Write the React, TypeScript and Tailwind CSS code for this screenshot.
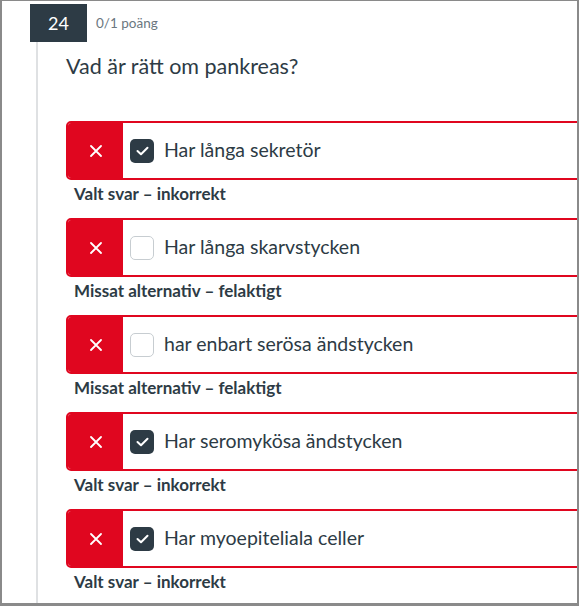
import React from "react";

type Answer = {
  text: string;
  checked: boolean;
  label: string;
};

const answers: Answer[] = [
  { text: "Har långa sekretör", checked: true, label: "Valt svar – inkorrekt" },
  { text: "Har långa skarvstycken", checked: false, label: "Missat alternativ – felaktigt" },
  { text: "har enbart serösa ändstycken", checked: false, label: "Missat alternativ – felaktigt" },
  { text: "Har seromykösa ändstycken", checked: true, label: "Valt svar – inkorrekt" },
  { text: "Har myoepiteliala celler", checked: true, label: "Valt svar – inkorrekt" },
];

function AnswerRow({ text, checked, label }: Answer) {
  return (
    <div>
      <div className="flex h-[59px] w-[560px] rounded-l-[5px] border-2 border-[#e0061f] overflow-hidden">
        <div className="flex w-[55px] items-center justify-center bg-[#e0061f]">
          <svg width="12" height="12" viewBox="0 0 12 12" fill="none">
            <path d="M1 1L11 11M11 1L1 11" stroke="white" strokeWidth="1.8" strokeLinecap="round" />
          </svg>
        </div>
        <div className="flex items-center pl-[7px]">
          {checked ? (
            <span className="flex h-[24px] w-[24px] items-center justify-center rounded-[5px] bg-[#2d3b45]">
              <svg width="13" height="10" viewBox="0 0 13 10" fill="none">
                <path d="M1.5 5L5 8.3L11.5 1.7" stroke="white" strokeWidth="2" strokeLinecap="round" strokeLinejoin="round" />
              </svg>
            </span>
          ) : (
            <span className="h-[24px] w-[24px] rounded-[5px] border border-[#c7cdd1] bg-white" />
          )}
          <span className="ml-[10px] -mt-[2px] text-[19.5px] text-[#2d3b45]">{text}</span>
        </div>
      </div>
      <div className="h-[38px] pl-[8px] pt-[3px] text-[17px] font-bold leading-[22px] text-[#2d3b45]">
        {label}
      </div>
    </div>
  );
}

export default function App() {
  return (
    <div
      className="h-[606px] w-[579px] overflow-hidden border-x-2 border-t border-b-[3px] border-[#8a8a8a] bg-white"
      style={{ fontFamily: "Lato, 'Noto Sans', sans-serif" }}
    >
      <div className="ml-[34px] h-full border-l-2 border-[#dfe1e3]">
        <div className="-ml-2 mt-[3px] flex items-center">
          <div className="flex h-[38px] w-[57px] items-center justify-center bg-[#2d3b45] text-[18px] text-white">
            24
          </div>
          <span className="ml-[9px] text-[13.5px] text-[#6b7780]">0/1 poäng</span>
        </div>
        <div className="pl-[28px]">
          <p className="mt-[10px] text-[21.5px] leading-[28px] text-[#2d3b45]">Vad är rätt om pankreas?</p>
          <div className="mt-[41px]">
            {answers.map((a, i) => (
              <AnswerRow key={i} {...a} />
            ))}
          </div>
        </div>
      </div>
    </div>
  );
}
